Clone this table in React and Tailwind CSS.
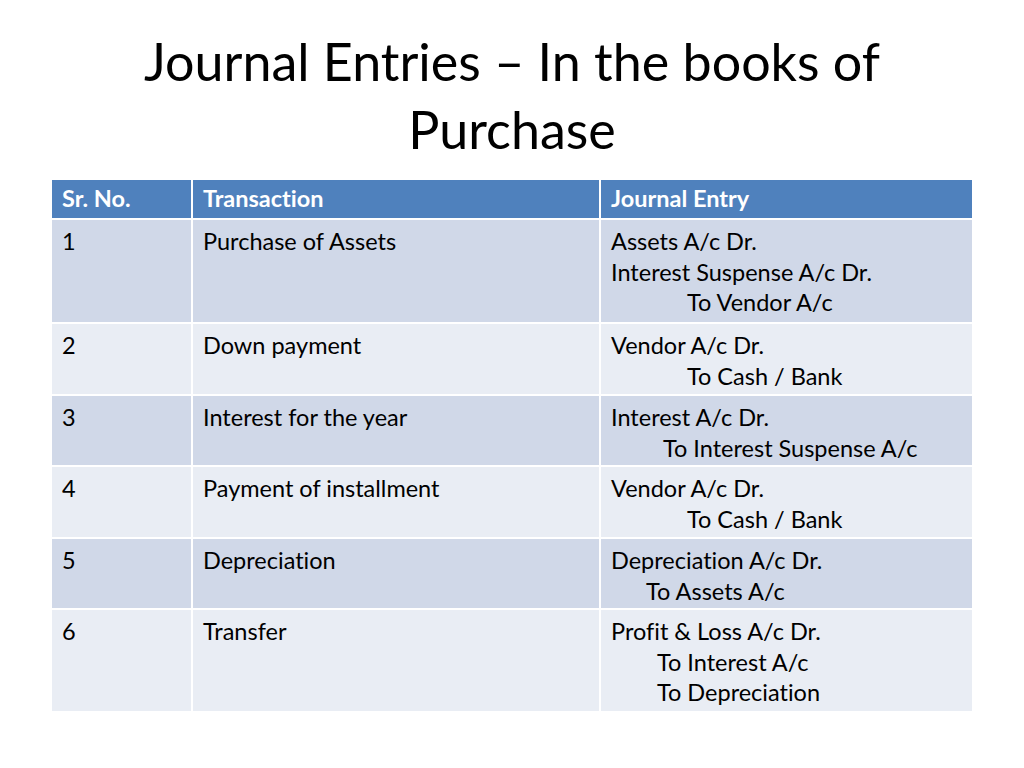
const ROWS = [
  {
    no: '1',
    txn: 'Purchase of Assets',
    h: 'h-[102px]',
    lines: [
      { t: 'Assets A/c Dr.', indent: 'pl-0' },
      { t: 'Interest Suspense A/c Dr.', indent: 'pl-0' },
      { t: 'To Vendor A/c', indent: 'pl-[76px]' },
    ],
  },
  {
    no: '2',
    txn: 'Down payment',
    h: 'h-[70px]',
    lines: [
      { t: 'Vendor A/c Dr.', indent: 'pl-0' },
      { t: 'To Cash / Bank', indent: 'pl-[76px]' },
    ],
  },
  {
    no: '3',
    txn: 'Interest for the year',
    h: 'h-[69px]',
    lines: [
      { t: 'Interest A/c Dr.', indent: 'pl-0' },
      { t: 'To Interest Suspense A/c', indent: 'pl-[52px]' },
    ],
  },
  {
    no: '4',
    txn: 'Payment of installment',
    h: 'h-[70px]',
    lines: [
      { t: 'Vendor A/c Dr.', indent: 'pl-0' },
      { t: 'To Cash / Bank', indent: 'pl-[76px]' },
    ],
  },
  {
    no: '5',
    txn: 'Depreciation',
    h: 'h-[69px]',
    lines: [
      { t: 'Depreciation A/c Dr.', indent: 'pl-0' },
      { t: 'To Assets A/c', indent: 'pl-[35px]' },
    ],
  },
  {
    no: '6',
    txn: 'Transfer',
    h: 'h-[101px]',
    lines: [
      { t: 'Profit & Loss A/c Dr.', indent: 'pl-0' },
      { t: 'To Interest A/c', indent: 'pl-[46px]' },
      { t: 'To Depreciation', indent: 'pl-[46px]' },
    ],
  },
]

function Row({ no, txn, lines, h, odd }) {
  const bg = odd ? 'bg-[#d0d8e8]' : 'bg-[#e9edf4]'
  return (
    <div className={`grid grid-cols-[139px_406px_371px] gap-x-[2px] ${h}`}>
      <div className={`${bg} pl-[10px] pt-[6px] leading-[30.5px]`}>{no}</div>
      <div className={`${bg} pl-[10px] pt-[6px] leading-[30.5px]`}>{txn}</div>
      <div className={`${bg} pl-[10px] pt-[6px] leading-[30.5px]`}>
        {lines.map((l) => (
          <div key={l.t} className={`${l.indent} whitespace-nowrap`}>
            {l.t}
          </div>
        ))}
      </div>
    </div>
  )
}

export default function App() {
  return (
    <div className="w-[1024px] h-[768px] bg-white font-['Lato','Liberation_Sans',sans-serif] text-black [font-variant-ligatures:none]">
      {/* Title */}
      <h1 className="pt-[27px] text-center text-[52px] leading-[68px] font-normal">
        Journal Entries – In the books of
        <br />
        Purchase
      </h1>

      {/* Table */}
      <div className="ml-[52px] mt-[17px] w-[920px] flex flex-col gap-y-[2px] text-[23.5px]">
        <div className="grid grid-cols-[139px_406px_371px] gap-x-[2px] h-[38px] text-white font-bold">
          <div className="bg-[#4f81bd] pl-[10px] flex items-center">Sr. No.</div>
          <div className="bg-[#4f81bd] pl-[10px] flex items-center">Transaction</div>
          <div className="bg-[#4f81bd] pl-[10px] flex items-center">Journal Entry</div>
        </div>
        {ROWS.map((r, i) => (
          <Row key={r.no} {...r} odd={i % 2 === 0} />
        ))}
      </div>
    </div>
  )
}
